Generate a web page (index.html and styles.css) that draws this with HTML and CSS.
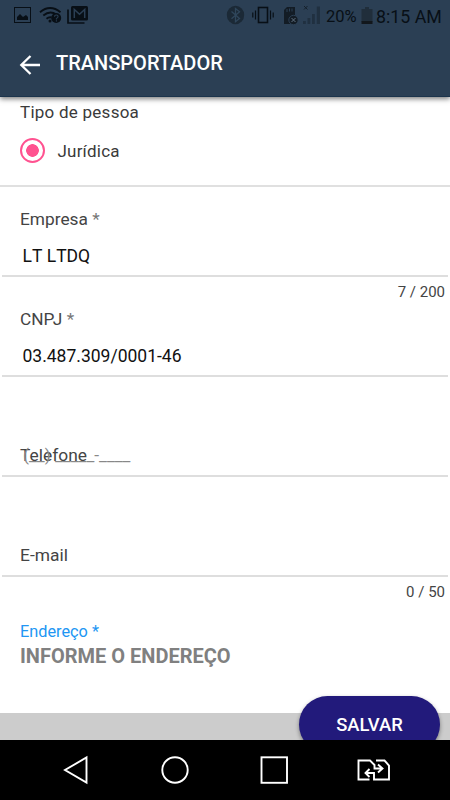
FILE: index.html
```html
<!DOCTYPE html>
<html lang="pt-BR">
<head>
  <meta charset="UTF-8">
  <meta name="viewport" content="width=device-width, initial-scale=1.0">
  <title>Transportador</title>
  <link rel="stylesheet" href="styles.css">
</head>
<body>
  <div class="screen">
    <header class="header">
      <!-- status bar -->
      <div class="status-bar">
        <svg class="status-left" width="90" height="32" viewBox="0 0 90 32">
          <rect x="14.5" y="7.5" width="16" height="15" fill="none" stroke="#080f16"/>
          <path d="M17 20v-3l3-3 3 3 3-2 2 2v3z" fill="#080f16"/>
          <g fill="none" stroke="#080f16" stroke-width="1.9">
            <path d="M40 12.2q10-8.4 20.500 0M43.300 15.600q6.700-5.600 13 -1M46.500 18.800q2.500-2 5-1.300"/>
          </g>
          <circle cx="50" cy="21" r="1.500" fill="#080f16"/>
          <circle cx="56.200" cy="18" r="5" fill="#080f16"/>
          <path d="M54.500 16.800q0-1.800 1.800-1.800t1.800 1.600q0 1-1.700 2v.8M56.400 20.300v1.200" fill="none" stroke="#2b3f54" stroke-width="1.100"/>
          <path d="M68 9.500V23h16.500" fill="none" stroke="#080f16" stroke-width="1.700"/>
          <rect x="71" y="6" width="17" height="14.500" rx="1.500" fill="#080f16"/>
          <path d="M74.300 18V9.500l5.200 4.700 5.200-4.700V18" fill="none" stroke="#2b3f54" stroke-width="1.500"/>
        </svg>
        <svg class="status-right" width="102" height="32" viewBox="222 0 102 32">
          <ellipse cx="235.500" cy="15" rx="8.700" ry="9.300" fill="#1b2936"/>
          <path d="M231.500 11.500l8 7-4 3.200V8.500l4 3.200-8 7" fill="none" stroke="#2f465b" stroke-width="1.300"/>
          <rect x="258.500" y="7.500" width="9" height="15" fill="none" stroke="#080f16" stroke-width="1.600"/>
          <path d="M255.500 10.500v9M252.800 12.500v5M270.500 10.500v9M273.200 12.500v5" stroke="#080f16" stroke-width="1.200"/>
          <path d="M284 10l3-3h8v17h-11z" fill="#131c25"/>
          <path d="M287 9v3M289.500 8.500v3M292 8.500v3" stroke="#2b3f54"/>
          <circle cx="293.500" cy="20" r="4.700" fill="#131c25" stroke="#2b3f54"/>
          <path d="M291.500 18l4 4m0-4l-4 4" stroke="#60707f"/>
          <path d="M304 6l3.500 3.500m0-3.500l-3.500 3.500" stroke="#15202b"/>
          <path d="M303 21h2.800v3h-2.800zM307.500 18h2.800v6h-2.800zM312 14h2.800v10h-2.800zM316.800 6.500h3.200V24h-3.200z" fill="#203040"/>
        </svg>
        <span class="battery-text">20%</span>
        <svg class="battery" width="12" height="20" viewBox="0 0 12 20">
          <path d="M.5 3H4V1h4v2h3.500v13H.5z" fill="#202e3b"/>
          <path d="M.5 15h11v3H.5z" fill="#12171c"/>
        </svg>
        <span class="clock">8:15 AM</span>
      </div>
      <div class="toolbar">
        <svg class="back" width="22" height="22" viewBox="0 0 22 22">
          <path d="M21 11H2.500M11.500 2L2.300 11l9.200 9" fill="none" stroke="#fff" stroke-width="2.300"/>
        </svg>
        <h1 class="title">TRANSPORTADOR</h1>
      </div>
    </header>

    <main class="content">
      <section class="person-type">
        <div class="group-label">Tipo de pessoa</div>
        <label class="radio">
          <span class="radio-mark"></span>
          <span class="radio-text">Jurídica</span>
        </label>
      </section>

      <div class="field">
        <div class="label">Empresa <span class="required">*</span></div>
        <div class="value company">LT LTDQ</div>
        <div class="counter">7 / 200</div>
      </div>
      <div class="field">
        <div class="label">CNPJ <span class="required">*</span></div>
        <div class="value">03.487.309/0001-46</div>
      </div>
      <div class="field empty">
        <div class="value placeholder">
          <span class="phone-label">Telefone</span>
          <span class="mask">(__) _____-____</span>
        </div>
      </div>
      <div class="field empty">
        <div class="value placeholder">E-mail</div>
        <div class="counter">0 / 50</div>
      </div>

      <div class="address">
        <div class="address-label">Endereço *</div>
        <div class="address-value">INFORME O ENDEREÇO</div>
      </div>
    </main>

    <footer class="footer">
      <button class="save">SALVAR</button>
    </footer>

    <!-- android navigation -->
    <nav class="nav-bar">
      <svg width="450" height="60" viewBox="0 0 450 60" fill="none" stroke="#fff" stroke-width="1.900">
        <path d="M86.500 17.500v25L65 30z"/>
        <circle cx="175" cy="30" r="12.700"/>
        <rect x="261.500" y="17.300" width="25.500" height="25.500"/>
        <path d="M369.500 39.500h-11v-19h11.500l4.500 4.500v3.500h7M378 24.500l4.500 4-4.500 4M376 20.500h8.500l4.500 5v14h-15v-6.500h-7M369.500 29l-4 4 4 4"/>
      </svg>
    </nav>
  </div>
</body>
</html>
```
FILE: styles.css
```css
* {
  box-sizing: border-box;
}

body {
  margin: 0;
  background: #fff;
  font-family: Roboto, "Liberation Sans", sans-serif;
  color: #444;
}

.screen {
  display: flex;
  flex-direction: column;
  width: 450px;
  height: 800px;
  overflow: hidden;
}

.header {
  position: relative;
  z-index: 1;
  height: 97px;
  background: #2b3f54;
  border-bottom: 1px solid #1c344c;
  box-shadow: 0 2px 5px rgba(0, 0, 0, 0.5);
}

.status-bar {
  display: flex;
  align-items: center;
  height: 32px;
  color: #080f16;
}

.status-right {
  margin-left: auto;
}

.battery-text {
  width: 34px;
  margin-left: 2px;
  font-size: 16.5px;
}

.battery {
  margin-left: 1px;
}

.clock {
  width: 77px;
  padding-left: 3px;
  font-size: 17.8px;
  white-space: nowrap;
}

.toolbar {
  display: flex;
  align-items: center;
  height: 64px;
  padding: 1px 0 0 19px;
}

.title {
  margin: -3px 0 0 15px;
  color: #fff;
  font-size: 20px;
  font-weight: 500;
}

.person-type {
  height: 90px;
  padding: 5px 20px 0;
  border-bottom: 2px solid #e0e0e0;
}

.group-label {
  color: #3a3a3a;
  font-size: 17px;
  line-height: 20px;
  letter-spacing: 0.25px;
}

.radio {
  display: flex;
  align-items: center;
  margin-top: 16px;
  color: #3a3a3a;
}

.radio-mark {
  width: 25px;
  height: 25px;
  border: 2.5px solid #ff5290;
  border-radius: 50%;
  background: radial-gradient(circle, #ff5290 6px, #fff 6.600px);
}

.radio-text {
  margin-left: 12.5px;
  font-size: 17px;
  letter-spacing: 0.2px;
}

.field {
  height: 100px;
  padding: 8px 2px 0;
}

.person-type + .field {
  margin-top: 14px;
}

.label {
  height: 31px;
  padding-left: 18px;
  font-size: 17.3px;
  line-height: 21px;
}

.required {
  color: #777;
}

.value {
  height: 37px;
  padding: 4px 0 0 20.5px;
  border-bottom: 2px solid #dedede;
  color: #111;
  font-size: 17.5px;
  line-height: 24px;
}

.company {
  font-kerning: none;
}

.empty {
  padding-top: 39px;
}

.placeholder {
  display: grid;
  padding: 3px 0 0 18px;
  color: #444;
  font-size: 17.4px;
}

/* the mask prints over the label while the field is empty */
.phone-label,
.mask {
  grid-area: 1 / 1;
}

.mask {
  padding-left: 3px;
  color: #888;
}

.counter {
  padding-right: 3px;
  font-size: 15px;
  line-height: 30px;
  text-align: right;
}

.address {
  padding: 21px 20px 0;
}

.address-label {
  color: #2196f3;
  font-size: 16.3px;
  line-height: 20px;
}

.address-value {
  margin-top: 2px;
  color: #808080;
  font-size: 20px;
  font-weight: 700;
  line-height: 24px;
}

.content {
  flex: none;
  height: 616px;
}

.footer {
  display: flex;
  justify-content: flex-end;
  height: 27px;
  padding-right: 10px;
  background: #ccc;
}

.save {
  flex: none;
  width: 141px;
  height: 57px;
  margin-top: -17px;
  padding: 0;
  border: 0;
  border-radius: 29px;
  background: #221a7b;
  box-shadow: 0 2px 4px rgba(0, 0, 0, 0.4);
  color: #fff;
  font-family: inherit;
  font-size: 18.4px;
  font-weight: 500;
}

.nav-bar {
  position: relative;
  flex: none;
  height: 60px;
  background: #000;
}
```
